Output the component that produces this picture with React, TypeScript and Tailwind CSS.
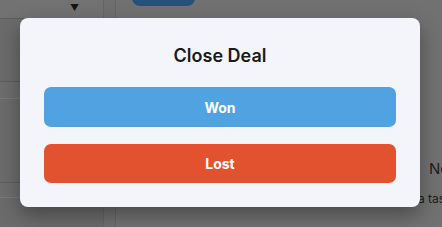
export default function App() {
  return (
    <main className="relative h-[227px] w-[442px] overflow-hidden bg-[#bdbdbd] font-['Inter',sans-serif]">
      {/* Page behind the dialog */}
      <div className="flex h-full">
        <aside className="flex w-[104px] shrink-0 flex-col border-r border-[#a9a9a9] bg-[#bebebe]">
          <div className="flex h-[19px] items-start justify-end border-b border-[#9a9a9a] pr-[24px] pt-[3px]">
            <span className="text-[9px] leading-none text-[#222]">▼</span>
          </div>
          <div className="h-[62px] bg-[#b3b3b3]" />
          <div className="h-[17px] border-t border-[#9a9a9a] bg-[#b6b6b6]" />
          <div className="h-[84px] border-t border-[#c8c8c8] bg-[#b3b3b3]" />
          <div className="h-[15px] border-t border-[#9a9a9a] bg-[#b6b6b6]" />
          <div className="flex-1 border-t border-[#c8c8c8] bg-[#b3b3b3]" />
        </aside>
        <div className="w-[12px] shrink-0 border-r border-[#a9a9a9] bg-[#b9b9b9]" />
        <section className="flex min-w-0 flex-1 flex-col overflow-hidden whitespace-nowrap pl-[16px]">
          <div className="h-[10px] w-[63px] -translate-y-[4px] rounded-b-[8px] bg-[#3f88cc]" />
          <div className="flex-1" />
          <p className="mb-[12px] pl-[297px] text-[15px] leading-[20px] text-[#333]">Next step</p>
          <p className="mb-[20px] pl-[286px] text-[12px] leading-[16px] text-[#333]">a task</p>
        </section>
      </div>

      {/* Overlay */}
      <div className="absolute inset-0 bg-black/40" />

      {/* Close Deal dialog */}
      <div className="absolute inset-0 flex items-center justify-center">
        <div className="w-[400px] -translate-x-[1px] -translate-y-[1px] rounded-[8px] bg-[#f4f5fa] p-6 shadow-[0_8px_20px_rgba(0,0,0,0.35)]">
          <h2 className="mb-[17px] text-center text-[18px] font-semibold leading-[28px] text-[#1a1a1a]">
            Close Deal
          </h2>
          <div className="flex flex-col gap-[17px]">
            <button className="h-[40px] rounded-[7px] bg-[#51a2e0] text-[14px] font-bold text-white">
              Won
            </button>
            <button className="h-[39px] rounded-[7px] bg-[#e2522f] text-[14px] font-bold text-white">
              Lost
            </button>
          </div>
        </div>
      </div>
    </main>
  );
}
